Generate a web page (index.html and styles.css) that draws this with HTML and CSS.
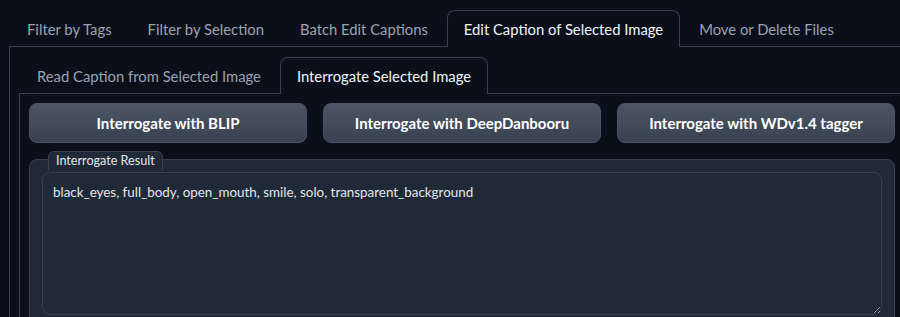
FILE: index.html
```html
<!DOCTYPE html>
<html lang="en">
<head>
    <meta charset="UTF-8">
    <title>Dataset Tag Editor</title>
    <link rel="stylesheet" href="styles.css">
</head>
<body>
    <div class="tabs outer">
        <div class="tab-nav">
            <button class="tab">Filter by Tags</button>
            <button class="tab">Filter by Selection</button>
            <button class="tab">Batch Edit Captions</button>
            <button class="tab selected">Edit Caption of Selected Image</button>
            <button class="tab">Move or Delete Files</button>
        </div>
        <div class="tab-panel">
            <div class="tabs inner">
                <div class="tab-nav">
                    <button class="tab">Read Caption from Selected Image</button>
                    <button class="tab selected">Interrogate Selected Image</button>
                </div>
                <div class="tab-panel">
                    <div class="button-row">
                        <button class="btn">Interrogate with BLIP</button>
                        <button class="btn">Interrogate with DeepDanbooru</button>
                        <button class="btn">Interrogate with WDv1.4 tagger</button>
                    </div>
                    <div class="block">
                        <span class="block-label">Interrogate Result</span>
                        <textarea class="result" rows="7">black_eyes, full_body, open_mouth, smile, solo, transparent_background</textarea>
                    </div>
                </div>
            </div>
        </div>
    </div>
</body>
</html>
```

FILE: styles.css
```css
html, body {
    margin: 0;
    background-color: #0b0f19;
    overflow: hidden;
    color-scheme: dark;
}
body {
    font-family: 'Lato', 'Noto Sans', sans-serif;
    padding: 10px 0 0 9px;
}
.tabs.outer {
    width: 906px;
}
.tab-nav {
    display: flex;
    gap: 2px;
    padding-left: 1px;
    border-bottom: 1px solid #374151;
}
.tab {
    height: 36px;
    padding: 0 16px;
    margin-bottom: -1px;
    border: 1px solid transparent;
    border-bottom: none;
    border-radius: 8px 8px 0 0;
    background: none;
    color: #9ca3af;
    font-family: inherit;
    font-size: 14.8px;
    cursor: pointer;
}
.tab.selected {
    height: 37px;
    border-color: #374151;
    background-color: #0b0f19;
    color: #f3f4f6;
}
.tab-panel {
    border: 1px solid #374151;
    border-top: none;
    padding: 10px 9px 9px 9px;
}
.inner > .tab-panel {
    padding-top: 9px;
}
.button-row {
    display: flex;
    gap: 16px;
}
.btn {
    flex: 1;
    height: 40px;
    border: 1px solid #4b5563;
    border-radius: 8px;
    background: linear-gradient(to bottom, #4b5563, #374151);
    color: #ffffff;
    font-family: inherit;
    font-size: 15px;
    font-weight: 700;
}
.block {
    position: relative;
    margin-top: 16px;
    padding: 12px;
    border: 1px solid #374151;
    border-radius: 8px;
    background-color: #202938;
}
.block-label {
    position: absolute;
    left: 18px;
    top: -9px;
    padding: 1px 7px 2px 7px;
    border: 1px solid #374151;
    border-bottom: none;
    border-radius: 6px 6px 0 0;
    background-color: #202938;
    color: #e5e7eb;
    font-size: 12.6px;
}
.result {
    display: block;
    box-sizing: border-box;
    width: 100%;
    height: 143px;
    padding: 9px 10px;
    border: 1px solid #374151;
    border-radius: 8px;
    background-color: #202938;
    color: #e5e7eb;
    font-family: inherit;
    font-size: 13.4px;
    line-height: 20px;
    resize: vertical;
    outline: none;
}
```
